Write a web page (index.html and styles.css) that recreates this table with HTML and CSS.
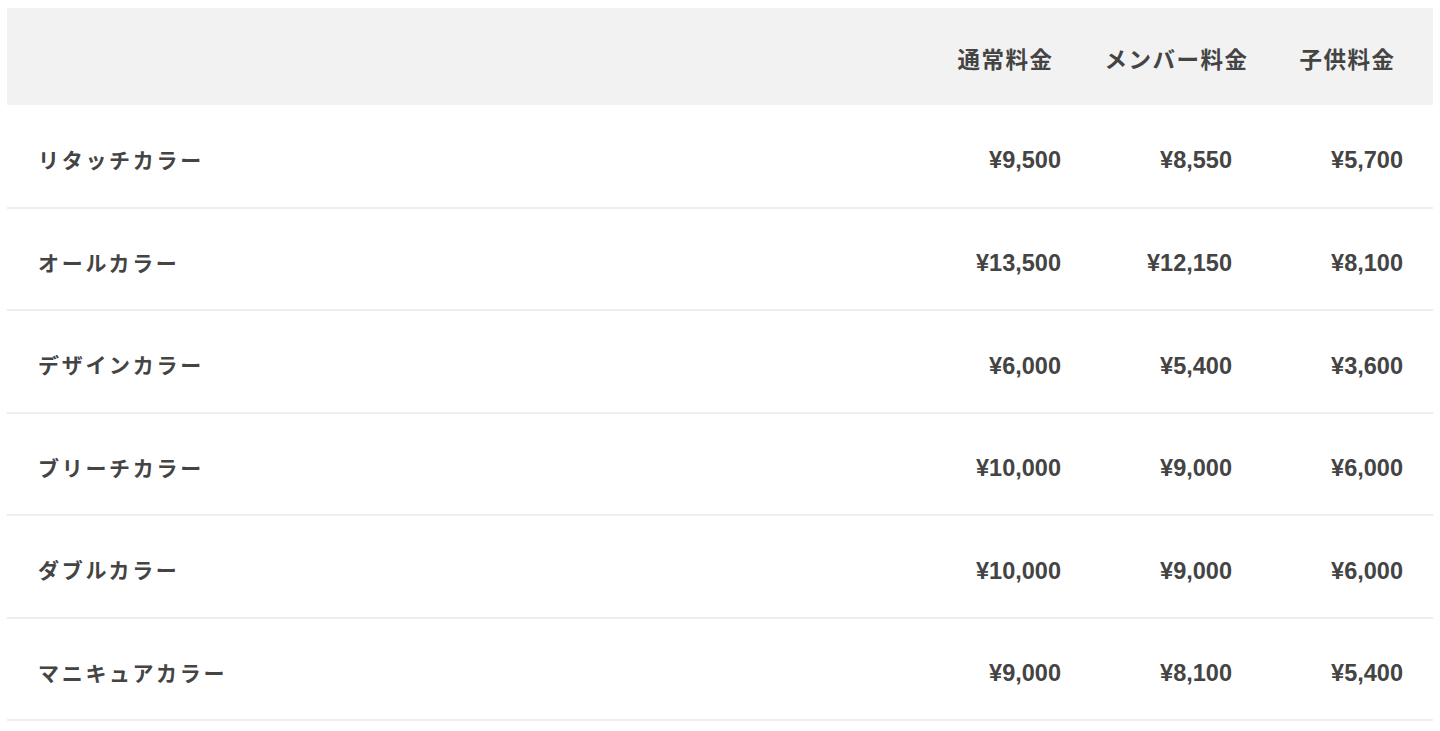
FILE: index.html
```html
<!DOCTYPE html>
<html lang="ja">
<head>
<meta charset="utf-8">
<link rel="stylesheet" href="styles.css">
</head>
<body>
<div class="wrap">
<table class="price">
  <thead>
    <tr><th class="name"></th><th>通常料金</th><th>メンバー料金</th><th>子供料金</th></tr>
  </thead>
  <tbody>
    <tr><td class="name">リタッチカラー</td><td>¥9,500</td><td>¥8,550</td><td>¥5,700</td></tr>
    <tr><td class="name">オールカラー</td><td>¥13,500</td><td>¥12,150</td><td>¥8,100</td></tr>
    <tr><td class="name">デザインカラー</td><td>¥6,000</td><td>¥5,400</td><td>¥3,600</td></tr>
    <tr><td class="name">ブリーチカラー</td><td>¥10,000</td><td>¥9,000</td><td>¥6,000</td></tr>
    <tr><td class="name">ダブルカラー</td><td>¥10,000</td><td>¥9,000</td><td>¥6,000</td></tr>
    <tr><td class="name">マニキュアカラー</td><td>¥9,000</td><td>¥8,100</td><td>¥5,400</td></tr>
  </tbody>
</table>
</div>
</body>
</html>
```

FILE: styles.css
```css
html, body { margin: 0; padding: 0; background: #fff; }
.wrap { padding: 8px 7px 0 7px; }
.price {
  width: 100%;
  border-collapse: collapse;
  table-layout: fixed;
  color: #444;
  font-family: "Noto Sans CJK JP", "Liberation Sans", sans-serif;
}
.price th, .price td { box-sizing: border-box; }
.price thead tr { background: #f2f2f2; height: 97px; }
.price th {
  font-size: 22.5px;
  font-weight: bold;
  letter-spacing: 1.5px;
  width: 171px;
  padding: 2px 0 0 0;
  text-align: center;
}
.price th.name { width: auto; }
.price tbody tr { height: 102.5px; border-bottom: 2px solid #eeeeee; }
.price td {
  font-family: "Liberation Sans", "Noto Sans CJK JP", sans-serif;
  font-size: 23.5px;
  font-weight: bold;
  letter-spacing: 0;
  text-align: right;
  padding: 10px 30px 0 0;
}
.price td.name {
  font-family: "Noto Sans CJK JP", sans-serif;
  font-size: 21px;
  letter-spacing: 2.7px;
  text-align: left;
  padding: 6px 0 0 31px;
}
```
